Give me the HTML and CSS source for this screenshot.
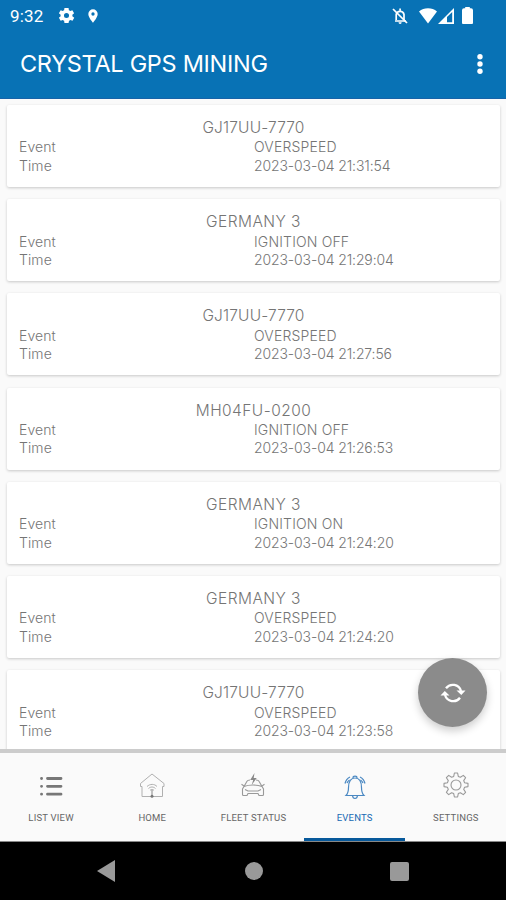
FILE: index.html
```html
<!DOCTYPE html>
<html lang="en">
<head>
<meta charset="utf-8">
<title>Crystal GPS Mining</title>
<link rel="stylesheet" href="styles.css">
</head>
<body>
<div class="phone">
  <header class="top">
    <div class="status">
      <span class="clock">9:32</span>
      <svg class="s-gear" viewBox="0 0 24 24"><path fill="#fff" fill-rule="evenodd" d="M19.4 13a7.500 7.500 0 0 0 0-2l2.200-1.700-2.200-3.900-2.700 1a8 8 0 0 0-1.700-1L14.600 2.500H9.400L9 5.400a8 8 0 0 0-1.700 1l-2.700-1-2.200 3.900L4.600 11a7.500 7.500 0 0 0 0 2l-2.200 1.700 2.200 3.900 2.700-1a8 8 0 0 0 1.700 1l.4 2.900h5.200l.6-2.900a8 8 0 0 0 1.700-1l2.700 1 2.200-3.900zM12 8.800a3.200 3.200 0 1 1 0 6.400 3.200 3.200 0 0 1 0-6.400z"/></svg>
      <svg class="s-pin" viewBox="0 0 24 24"><path fill="#fff" fill-rule="evenodd" d="M12 2a7 7 0 0 0-7 7c0 5.300 7 13 7 13s7-7.700 7-13a7 7 0 0 0-7-7zm0 4.500a2.500 2.500 0 1 1 0 5 2.500 2.500 0 0 1 0-5z"/></svg>
      <svg class="s-bell" viewBox="0 0 18 18"><g fill="none" stroke="#fff" stroke-width="1.700"><path d="M4 14h11M5.200 13V7.500a4 4 0 0 1 7.800 0V13M9.100 1.500v2"/><path d="M2 2l14 14"/></g><path fill="#fff" d="M7.500 15.300h3.200a1.600 1.600 0 0 1-3.200 0z"/></svg>
      <svg class="s-wifi" viewBox="0 0 18 16"><path fill="#fff" d="M0 3.500a14 14 0 0 1 18 0L9 15.500z"/></svg>
      <svg class="s-cell" viewBox="0 0 16 16"><path fill="#fff" fill-rule="evenodd" d="M0 16L16 0v16zM9 9v5.200h5.200V4z"/></svg>
      <svg class="s-batt" viewBox="0 0 11 17"><path fill="#fff" d="M3.200 0h4.600v1.200H9a2 2 0 0 1 2 2V16a1 1 0 0 1-1 1H1a1 1 0 0 1-1-1V3.200a2 2 0 0 1 2-2h1.200z"/></svg>
    </div>
    <div class="bar"><h1>CRYSTAL GPS MINING</h1><svg class="more" viewBox="0 0 8 22"><g fill="#fff"><circle cx="4" cy="3.700" r="2.700"/><circle cx="4" cy="11" r="2.700"/><circle cx="4" cy="18.300" r="2.700"/></g></svg></div>
  </header>
  <main class="list">
    <article class="card"><h2 class="gj">GJ17UU-7770</h2><dl><dt>Event</dt><dd>OVERSPEED</dd><dt>Time</dt><dd class="time">2023-03-04 21:31:54</dd></dl></article>
    <article class="card"><h2 class="ger">GERMANY 3</h2><dl><dt>Event</dt><dd>IGNITION OFF</dd><dt>Time</dt><dd class="time">2023-03-04 21:29:04</dd></dl></article>
    <article class="card"><h2 class="gj">GJ17UU-7770</h2><dl><dt>Event</dt><dd>OVERSPEED</dd><dt>Time</dt><dd class="time">2023-03-04 21:27:56</dd></dl></article>
    <article class="card"><h2 class="mh">MH04FU-0200</h2><dl><dt>Event</dt><dd>IGNITION OFF</dd><dt>Time</dt><dd class="time">2023-03-04 21:26:53</dd></dl></article>
    <article class="card"><h2 class="ger">GERMANY 3</h2><dl><dt>Event</dt><dd>IGNITION ON</dd><dt>Time</dt><dd class="time">2023-03-04 21:24:20</dd></dl></article>
    <article class="card"><h2 class="ger">GERMANY 3</h2><dl><dt>Event</dt><dd>OVERSPEED</dd><dt>Time</dt><dd class="time">2023-03-04 21:24:20</dd></dl></article>
    <article class="card"><h2 class="gj">GJ17UU-7770</h2><dl><dt>Event</dt><dd>OVERSPEED</dd><dt>Time</dt><dd class="time">2023-03-04 21:23:58</dd></dl></article>
  </main>
  <button class="fab" aria-label="Refresh"><svg viewBox="0 0 26 24"><g fill="none" stroke="#fff" stroke-width="2.300"><path d="M6 7.300A8.500 8.500 0 0 1 21 10"/><path d="M20 16.700A8.500 8.500 0 0 1 5 14"/></g><path fill="#fff" d="M16.500 9.500H25.500L21.300 14zM.5 14.500h9L4.800 10z"/></svg></button>
  <nav class="tabs">
    <a class="tab"><svg viewBox="0 0 28 28"><g stroke="#777" stroke-width="2.800" stroke-linecap="round"><path d="M10.500 6.500H24M10.500 14.300H24M10.500 22.200H24"/><path d="M4.500 6.500h.1M4.500 14.300h.1M4.500 22.200h.1"/></g></svg><span>LIST VIEW</span></a>
    <a class="tab"><svg viewBox="0 0 28 28"><g fill="none" stroke="#b0b0b0" stroke-width="1"><path d="M4 24.500V14.500H2.500V11.500L14 2l12 9.500v3h-1.500v10H4z"/><path d="M9 14.500c3-2.800 7.500-2.800 10 0M10.500 16.500c2-2 5-2 7 0M12 18.300c1.200-1 2.800-1 4 0"/></g><path stroke="#888" d="M14 18v6"/><circle cx="14" cy="24.200" r="1.500" fill="#777"/></svg><span>HOME</span></a>
    <a class="tab"><svg viewBox="0 0 28 28"><g fill="none" stroke="#999" stroke-width="1.100"><path d="M5 14.500L8 9.200q.6-1 3-1.200M17 8q2.500.2 3 1.200l3 5.300M5 14.500c5-2 13-2 18 0l1.500 2.500v5.500q0 1-1 1H20l-1-2H9l-1 2H4.500q-1 0-1-1V17z"/><path d="M5 14L2.500 12.300M23 14l2.500-1.700M6 17.500l3 1.500h10l3-1.500"/></g><path fill="#888" d="M15.500 1l-4.300 7h3l-1.500 5 5-7h-3z"/></svg><span>FLEET STATUS</span></a>
    <a class="tab active"><svg viewBox="0 0 28 28"><g fill="none" stroke="#4a88c2" stroke-width="1.200"><path d="M5 23.500c2-2 2.500-3.500 2.500-8C7.500 9 10 6 14 6s6.500 3 6.500 9.500c0 4.500.5 6 2.500 8z"/><path d="M12 6q0-1.800 2-1.800T16 6M11.500 23.500q.3 3 2.500 3t2.500-3M8.500 8Q6.500 9.500 6 11M19.500 8q2 1.500 2.500 3M9 5Q5 7 4 11.500M19 5q4 2 5 6.500"/></g></svg><span>EVENTS</span></a>
    <a class="tab"><svg class="cog" viewBox="0 0 28 28"><g fill="none" stroke="#999" stroke-width="1.100" stroke-linejoin="round"><path d="M11.700 5.400L12.400 2h3.200l.7 3.400 2.100.9 2.900-1.900 2.300 2.300-1.900 2.900.9 2.100 3.400.7v3.200l-3.400.7-.9 2.100 1.900 2.900-2.300 2.300-2.900-1.900-2.100.9-.7 3.400h-3.200l-.7-3.400-2.100-.9-2.900 1.900-2.300-2.300 1.900-2.900-.9-2.100L2 15.600v-3.200l3.400-.7.9-2.100-1.900-2.900 2.300-2.300 2.900 1.900z"/><circle cx="14" cy="14" r="5"/></g></svg><span>SETTINGS</span></a>
  </nav>
  <footer class="sys"><svg viewBox="0 0 18 22"><path fill="#999" d="M0 11L18 0v22z"/></svg><i class="dot"></i><i class="square"></i></footer>
</div>
</body>
</html>
```
FILE: styles.css
```css
* { box-sizing: border-box; }
body { margin: 0; font-family: Inter, sans-serif; }
.phone { position: relative; width: 506px; height: 900px; overflow: hidden; display: flex; flex-direction: column; background: #fafafa; }
.top { height: 99px; flex: none; background: #0872b5; border-bottom: 1px solid #1763a8; color: #fff; }
.status { height: 31px; display: flex; align-items: center; padding-left: 10px; }
.status svg { flex: none; }
.clock { width: 35px; font: 400 17px/32px Roboto, sans-serif; letter-spacing: 0.2px; }
.s-gear { width: 19px; height: 19px; margin-left: 12px; }
.s-pin { width: 16px; height: 16px; margin-left: 9px; }
.s-bell { width: 18px; height: 18px; margin-left: 290px; }
.s-wifi { width: 18px; height: 16px; margin-left: 10px; }
.s-cell { width: 16px; height: 16px; margin-left: 1px; }
.s-batt { width: 11px; height: 17px; margin-left: 8px; }
.bar { height: 66px; display: flex; justify-content: space-between; align-items: center; padding: 0 22px 0 20px; }
.bar h1 { margin: 0; font-size: 23.500px; line-height: 32px; font-weight: 400; letter-spacing: -0.3px; white-space: nowrap; }
.more { width: 8px; height: 22px; }
.list { height: 650px; flex: none; overflow: hidden; padding: 6px 6px 0 7px; display: flex; flex-direction: column; gap: 12.200px; }
.card { height: 82px; flex: none; background: #fff; border-radius: 2px; padding: 13px 12px 0; box-shadow: 0 1px 3px rgba(0,0,0,.2); color: #757575; font-weight: 300; }
.card h2 { margin: 0; text-align: center; font-size: 15.500px; line-height: 20.400px; font-weight: 300; }
.card .gj { letter-spacing: 0.15px; }
.card .ger, .card .mh { letter-spacing: 0.45px; }
.card dl { margin: 0; display: grid; grid-template-columns: 235px 1fr; font-size: 14px; line-height: 18.500px; }
.card dt { letter-spacing: 0.1px; }
.card dd { margin: 0; letter-spacing: 0.17px; }
.card .time { letter-spacing: -0.12px; }
.fab { position: absolute; left: 418px; top: 658px; width: 69px; height: 69px; border: 0; border-radius: 50%; padding: 0; background: #8b8b8b; box-shadow: 0 4px 8px rgba(0,0,0,.2); display: grid; place-items: center; }
.fab svg { width: 26px; height: 24px; }
.tabs { height: 93px; flex: none; background: #fafafa; border-top: 4px solid #ccc; display: grid; grid-template-columns: repeat(5, 1fr); border-bottom: 1px solid #888; }
.tab { display: flex; flex-direction: column; align-items: center; padding: 19px 0 0 1px; color: #666; font: 400 9.500px/12px Roboto, sans-serif; letter-spacing: 0.2px; }
.tab svg { width: 28px; height: 28px; margin-bottom: 12px; }
.tab .cog { margin: -1px 0 13px; }
.tab.active { color: #1769b3; box-shadow: inset 0 -3px #07599b; }
.sys { flex: 1; background: #000; display: grid; grid-template-columns: 148px 145px 20px; align-items: center; padding-left: 97px; }
.sys svg { width: 18px; height: 22px; }
.dot { width: 18px; height: 18px; border-radius: 50%; background: #999; }
.square { width: 19px; height: 19px; border-radius: 2px; background: #999; }
```
